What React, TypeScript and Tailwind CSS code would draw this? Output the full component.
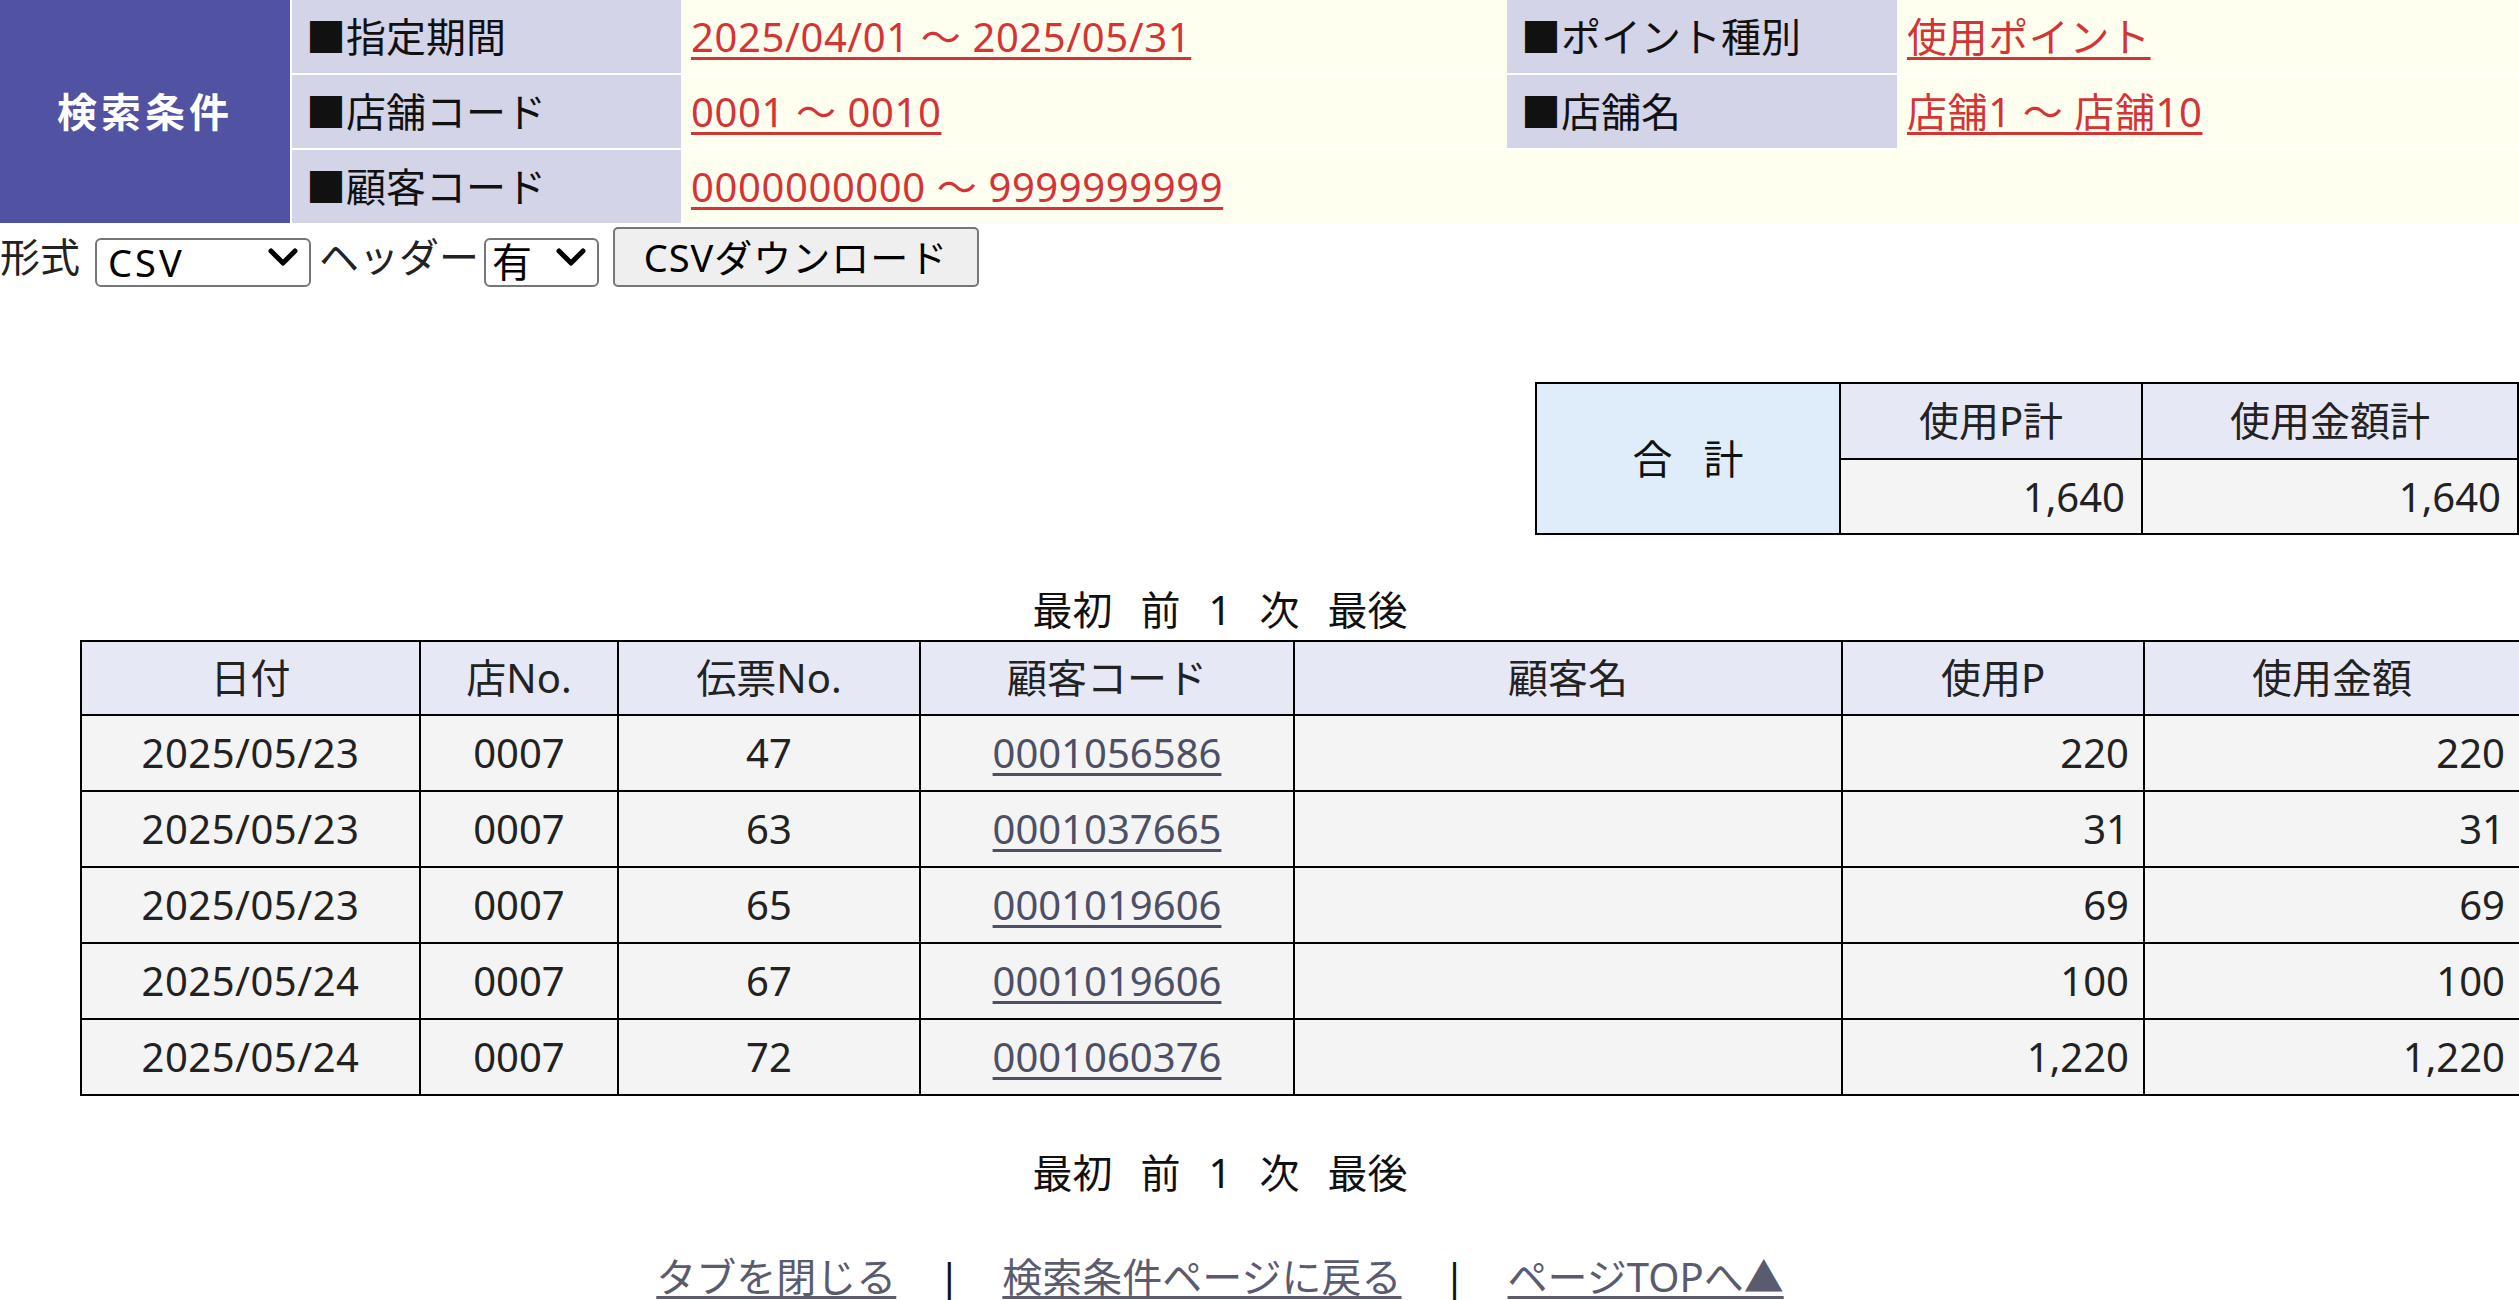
import React from "react";

const rows = [
  ["2025/05/23", "0007", "47", "0001056586", "", "220", "220"],
  ["2025/05/23", "0007", "63", "0001037665", "", "31", "31"],
  ["2025/05/23", "0007", "65", "0001019606", "", "69", "69"],
  ["2025/05/24", "0007", "67", "0001019606", "", "100", "100"],
  ["2025/05/24", "0007", "72", "0001060376", "", "1,220", "1,220"],
];

function Chevron() {
  return (
    <svg width="30" height="18" viewBox="0 0 30 18" className="block">
      <path d="M3 3 L15 15 L27 3" fill="none" stroke="#000" strokeWidth="5" strokeLinecap="round" strokeLinejoin="round" />
    </svg>
  );
}

function RedLink({ children }: { children: React.ReactNode }) {
  return (
    <a href="#" className="text-[#d43436] tracking-[0.6px] underline decoration-[3px] underline-offset-[5px]">
      {children}
    </a>
  );
}

function Label({ children }: { children: React.ReactNode }) {
  return <div className="bg-[#d4d4e9] flex items-center pl-[14px] text-[#111]">{children}</div>;
}

function Value({ children }: { children?: React.ReactNode }) {
  return <div className="bg-[#fffff0] flex items-center pl-[10px]">{children}</div>;
}

export default function App() {
  return (
    <div className="font-['Noto_Sans','Noto_Sans_CJK_JP',sans-serif] text-[40px] text-[#222] bg-white min-h-[1300px] leading-normal">
      {/* search conditions */}
      <div className="flex h-[223px]">
        <div className="w-[290px] bg-[#5252a2] text-white font-bold tracking-[4px] flex items-center justify-center">
          検索条件
        </div>
        <div className="ml-[2px] flex-1 grid grid-cols-[389px_826px_390px_1fr] grid-rows-[73px_73px_73px] gap-y-[2px]">
          <Label>■指定期間</Label>
          <Value>
            <RedLink>2025/04/01 ～ 2025/05/31</RedLink>
          </Value>
          <Label>■ポイント種別</Label>
          <Value>
            <RedLink>使用ポイント</RedLink>
          </Value>
          <Label>■店舗コード</Label>
          <Value>
            <RedLink>0001 ～ 0010</RedLink>
          </Value>
          <Label>■店舗名</Label>
          <Value>
            <RedLink>店舗1 ～ 店舗10</RedLink>
          </Value>
          <Label>■顧客コード</Label>
          <Value>
            <RedLink>0000000000 ～ 9999999999</RedLink>
          </Value>
          <Value />
          <Value />
        </div>
      </div>

      {/* controls */}
      <div className="flex items-center h-[67px]">
        <span>形式</span>
        <div className="relative ml-[15px] w-[216px] h-[49px]">
          <select className="appearance-none w-full h-full border-2 border-[#767676] rounded-[6px] bg-white pl-[11px] text-[38px] tracking-[3px] leading-none text-black">
            <option>CSV</option>
          </select>
          <div className="absolute right-[13px] top-[16px] pointer-events-none">
            <Chevron />
          </div>
        </div>
        <span className="ml-[8px]">ヘッダー</span>
        <div className="relative ml-[5px] w-[115px] h-[49px]">
          <select className="appearance-none w-full h-full border-2 border-[#767676] rounded-[6px] bg-white pl-[6px] text-[40px] leading-none text-black">
            <option>有</option>
          </select>
          <div className="absolute right-[13px] top-[16px] pointer-events-none">
            <Chevron />
          </div>
        </div>
        <button className="ml-[14px] w-[366px] h-[60px] bg-[#efefef] border-2 border-[#767676] rounded-[5px] text-[38px] tracking-[1px] text-black leading-none">
          CSVダウンロード
        </button>
      </div>

      {/* totals */}
      <div className="flex justify-end mt-[92px]">
        <table className="border-collapse border-2 border-black table-fixed w-[982px]">
          <colgroup>
            <col className="w-[304px]" />
            <col className="w-[302px]" />
            <col className="w-[376px]" />
          </colgroup>
          <tbody>
            <tr className="h-[76px]">
              <td rowSpan={2} className="border-2 border-black bg-[#dfedfa] text-center text-[#111]">
                合&nbsp;&nbsp;&nbsp;計
              </td>
              <td className="border-2 border-black bg-[#e6e8f6] text-center">使用P計</td>
              <td className="border-2 border-black bg-[#e6e8f6] text-center">使用金額計</td>
            </tr>
            <tr className="h-[75px]">
              <td className="border-2 border-black bg-[#f4f4f4] text-right pr-[16px]">1,640</td>
              <td className="border-2 border-black bg-[#f4f4f4] text-right pr-[16px]">1,640</td>
            </tr>
          </tbody>
        </table>
      </div>

      {/* pagination top */}
      <div className="w-[2440px] mt-[53px] h-[44px] flex items-center justify-center gap-[28px] text-[#111]">
        <span>最初</span>
        <span>前</span>
        <span>1</span>
        <span>次</span>
        <span>最後</span>
      </div>

      {/* main table */}
      <table className="ml-[80px] mt-[8px] w-[2439px] table-fixed border-collapse border-2 border-black">
        <colgroup>
          <col className="w-[339px]" />
          <col className="w-[198px]" />
          <col className="w-[302px]" />
          <col className="w-[374px]" />
          <col className="w-[548px]" />
          <col className="w-[302px]" />
          <col className="w-[376px]" />
        </colgroup>
        <thead>
          <tr className="h-[74px] bg-[#e6e8f6]">
            {["日付", "店No.", "伝票No.", "顧客コード", "顧客名", "使用P", "使用金額"].map((h) => (
              <th key={h} className="border-2 border-black font-normal text-center">
                {h}
              </th>
            ))}
          </tr>
        </thead>
        <tbody>
          {rows.map((r, i) => (
            <tr key={i} className="h-[76px] bg-[#f4f4f4]">
              <td className="border-2 border-black text-center tracking-[0.5px]">{r[0]}</td>
              <td className="border-2 border-black text-center">{r[1]}</td>
              <td className="border-2 border-black text-center">{r[2]}</td>
              <td className="border-2 border-black text-center">
                <a href="#" className="text-[#4d4f66] underline decoration-[3px] underline-offset-[5px]">
                  {r[3]}
                </a>
              </td>
              <td className="border-2 border-black">{r[4]}</td>
              <td className="border-2 border-black text-right pr-[14px]">{r[5]}</td>
              <td className="border-2 border-black text-right pr-[14px]">{r[6]}</td>
            </tr>
          ))}
        </tbody>
      </table>

      {/* pagination bottom */}
      <div className="w-[2440px] mt-[55px] h-[44px] flex items-center justify-center gap-[28px] text-[#111]">
        <span>最初</span>
        <span>前</span>
        <span>1</span>
        <span>次</span>
        <span>最後</span>
      </div>

      {/* footer */}
      <div className="w-[2440px] mt-[60px] h-[44px] flex items-center justify-center gap-[42px]">
        <a href="#" className="text-[#5a5b6e] underline decoration-[3px] underline-offset-[4px]">
          タブを閉じる
        </a>
        <span className="text-[#111]">|</span>
        <a href="#" className="text-[#5a5b6e] underline decoration-[3px] underline-offset-[4px]">
          検索条件ページに戻る
        </a>
        <span className="text-[#111]">|</span>
        <a href="#" className="text-[#5a5b6e] underline decoration-[3px] underline-offset-[4px]">
          ページTOPへ▲
        </a>
      </div>
    </div>
  );
}
